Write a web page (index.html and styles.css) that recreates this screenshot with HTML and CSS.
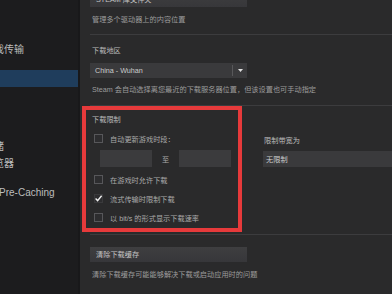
FILE: index.html
```html
<!DOCTYPE html>
<html lang="zh-CN">
<head>
<meta charset="utf-8">
<title>Steam 设置 - 下载</title>
<link rel="stylesheet" href="styles.css">
</head>
<body>
<div class="app">
  <nav class="sidebar">
    <div class="group">
      <div class="nav-item">账户</div>
      <div class="nav-item">界面</div>
      <div class="nav-item">本地游戏传输</div>
    </div>
    <div class="group">
      <div class="nav-item active">下载</div>
      <div class="nav-item">云</div>
      <div class="nav-item">语音</div>
      <div class="nav-item">游戏中</div>
      <div class="nav-item">云端存储</div>
      <div class="nav-item">网页浏览器</div>
    </div>
    <div class="group">
      <div class="nav-item">Shader Pre-Caching</div>
    </div>
  </nav>

  <main class="content">
    <div class="btn btn-top">STEAM 库文件夹</div>
    <p class="desc desc-first">管理多个驱动器上的内容位置</p>
    <div class="sep sep-1"></div>

    <div class="label label-region">下载地区</div>
    <div class="select region">
      <span class="select-text">China - Wuhan</span>
      <span class="caret"><svg width="5" height="3" viewBox="0 0 5 3"><path d="M0 0H5L2.5 3Z" fill="#e0e0e0"/></svg></span>
    </div>
    <p class="desc desc-region">Steam 会自动选择离您最近的下载服务器位置，但该设置也可手动指定</p>
    <div class="sep sep-2"></div>

    <div class="label label-limits">下载限制</div>
    <div class="limit-cols">
      <div class="limit-left">
        <div class="check row-1"><span class="box"></span><span>自动更新游戏时段：</span></div>
        <div class="time-row"><span class="field"></span><span class="to">至</span><span class="field"></span></div>
        <div class="check row-2"><span class="box"></span><span>在游戏时允许下载</span></div>
        <div class="check row-n"><span class="box checked"><svg width="9" height="9" viewBox="0 0 9 9"><path d="M1.6 4.6L3.6 6.6L7.6 1.8" fill="none" stroke="#f2f2f2" stroke-width="1.4"/></svg></span><span>流式传输时限制下载</span></div>
        <div class="check row-n"><span class="box"></span><span>以 bit/s 的形式显示下载速率</span></div>
      </div>
      <div class="limit-right">
        <div class="label label-bw">限制带宽为</div>
        <div class="select bw"><span class="select-text">无限制</span></div>
      </div>
    </div>
    <div class="sep sep-3"></div>

    <div class="btn btn-clear">清除下载缓存</div>
    <p class="desc desc-clear">清除下载缓存可能能够解决下载或启动应用时的问题</p>

    <div class="annotation"></div>
  </main>
</div>
</body>
</html>
```

FILE: styles.css
```css
html, body {
  margin: 0;
  padding: 0;
  width: 392px;
  height: 294px;
  overflow: hidden;
  background: #2a2a2b;
  font-family: "Liberation Sans", "Noto Sans CJK SC", sans-serif;
}

.app {
  display: flex;
  height: 294px;
}

/* Sidebar */
.sidebar {
  width: 78px;
  flex: none;
  background: #1c1c1e;
  border-right: 2px solid #18181a;
  overflow: hidden;
  padding-top: 7px;
  box-sizing: content-box;
  font-size: 10px;
  color: #bdbdbd;
}

.group + .group {
  margin-top: 12px;
}

.nav-item {
  height: 17px;
  line-height: 17px;
  margin-left: -36px;
  white-space: nowrap;
}

.nav-item.active {
  background: #1f3d5c;
}

/* Main content */
.content {
  position: relative;
  flex: 1;
  overflow: hidden;
  padding-left: 10px;
  font-size: 7.2px;
  color: #bdbdbd;
}

.btn {
  width: 157px;
  height: 15px;
  line-height: 15px;
  padding-left: 6px;
  box-sizing: border-box;
  background: linear-gradient(#3e3e40, #37373a);
  color: #c4c4c4;
  white-space: nowrap;
}

.btn-top {
  margin-top: -8px;
}

.desc {
  margin: 0;
  padding-left: 2px;
  line-height: 10px;
  color: #9c9c9c;
  white-space: nowrap;
}

.desc-first { margin-top: 8px; }
.desc-region { margin-top: 7px; }
.desc-clear { margin-top: 8px; }

.sep {
  height: 1px;
  background: #3c3c3e;
}

.sep-1 { margin-top: 9px; }
.sep-2 { margin-top: 10px; }
.sep-3 { margin-top: 11px; }

.label {
  padding-left: 2px;
  line-height: 10px;
  color: #bcbcbc;
  white-space: nowrap;
}

.label-region { margin-top: 11px; }
.label-limits { margin-top: 9px; }

.select {
  display: flex;
  align-items: center;
  height: 15px;
  background: #3a3a3c;
  box-sizing: border-box;
  color: #cccccc;
}

.select-text {
  flex: 1;
  padding-left: 5px;
  white-space: nowrap;
}

.region {
  width: 157px;
  margin-top: 7px;
}

.caret {
  width: 14px;
  height: 11px;
  border-left: 1px solid #58585a;
  display: flex;
  align-items: center;
  justify-content: center;
}

/* Download limits */
.limit-cols {
  display: flex;
  margin-top: 8px;
}

.limit-left {
  width: 173px;
  flex: none;
}

.check {
  display: flex;
  align-items: center;
  height: 11px;
  padding-left: 4px;
  color: #a9a9a9;
  white-space: nowrap;
}

.box {
  width: 9px;
  height: 9px;
  box-sizing: border-box;
  border: 1px solid #57575a;
  background: #2d2d2f;
  margin-right: 7px;
  flex: none;
  position: relative;
}

.box.checked {
  border-color: #3a3a3c;
}

.box.checked svg {
  position: absolute;
  left: -1px;
  top: -1px;
}

.row-2 { margin-top: 7px; }
.row-n { margin-top: 8px; }

.time-row {
  display: flex;
  align-items: center;
  margin-top: 6px;
  padding-left: 10px;
  height: 17px;
}

.field {
  width: 52px;
  height: 17px;
  background: #3b3b3d;
}

.to {
  margin: 0 10px;
  color: #a9a9a9;
}

.limit-right {
  flex: none;
}

.label-bw {
  margin-top: 3px;
  padding-left: 1px;
}

.bw {
  width: 140px;
  height: 16px;
  margin-top: 5px;
}

.bw .select-text {
  padding-left: 3px;
}

.btn-clear {
  margin-top: 12px;
}

/* Red annotation frame drawn over the download limits section */
.annotation {
  position: absolute;
  left: 2px;
  top: 106px;
  width: 160px;
  height: 126px;
  box-sizing: border-box;
  border: 4px solid #e63a3b;
}
```
